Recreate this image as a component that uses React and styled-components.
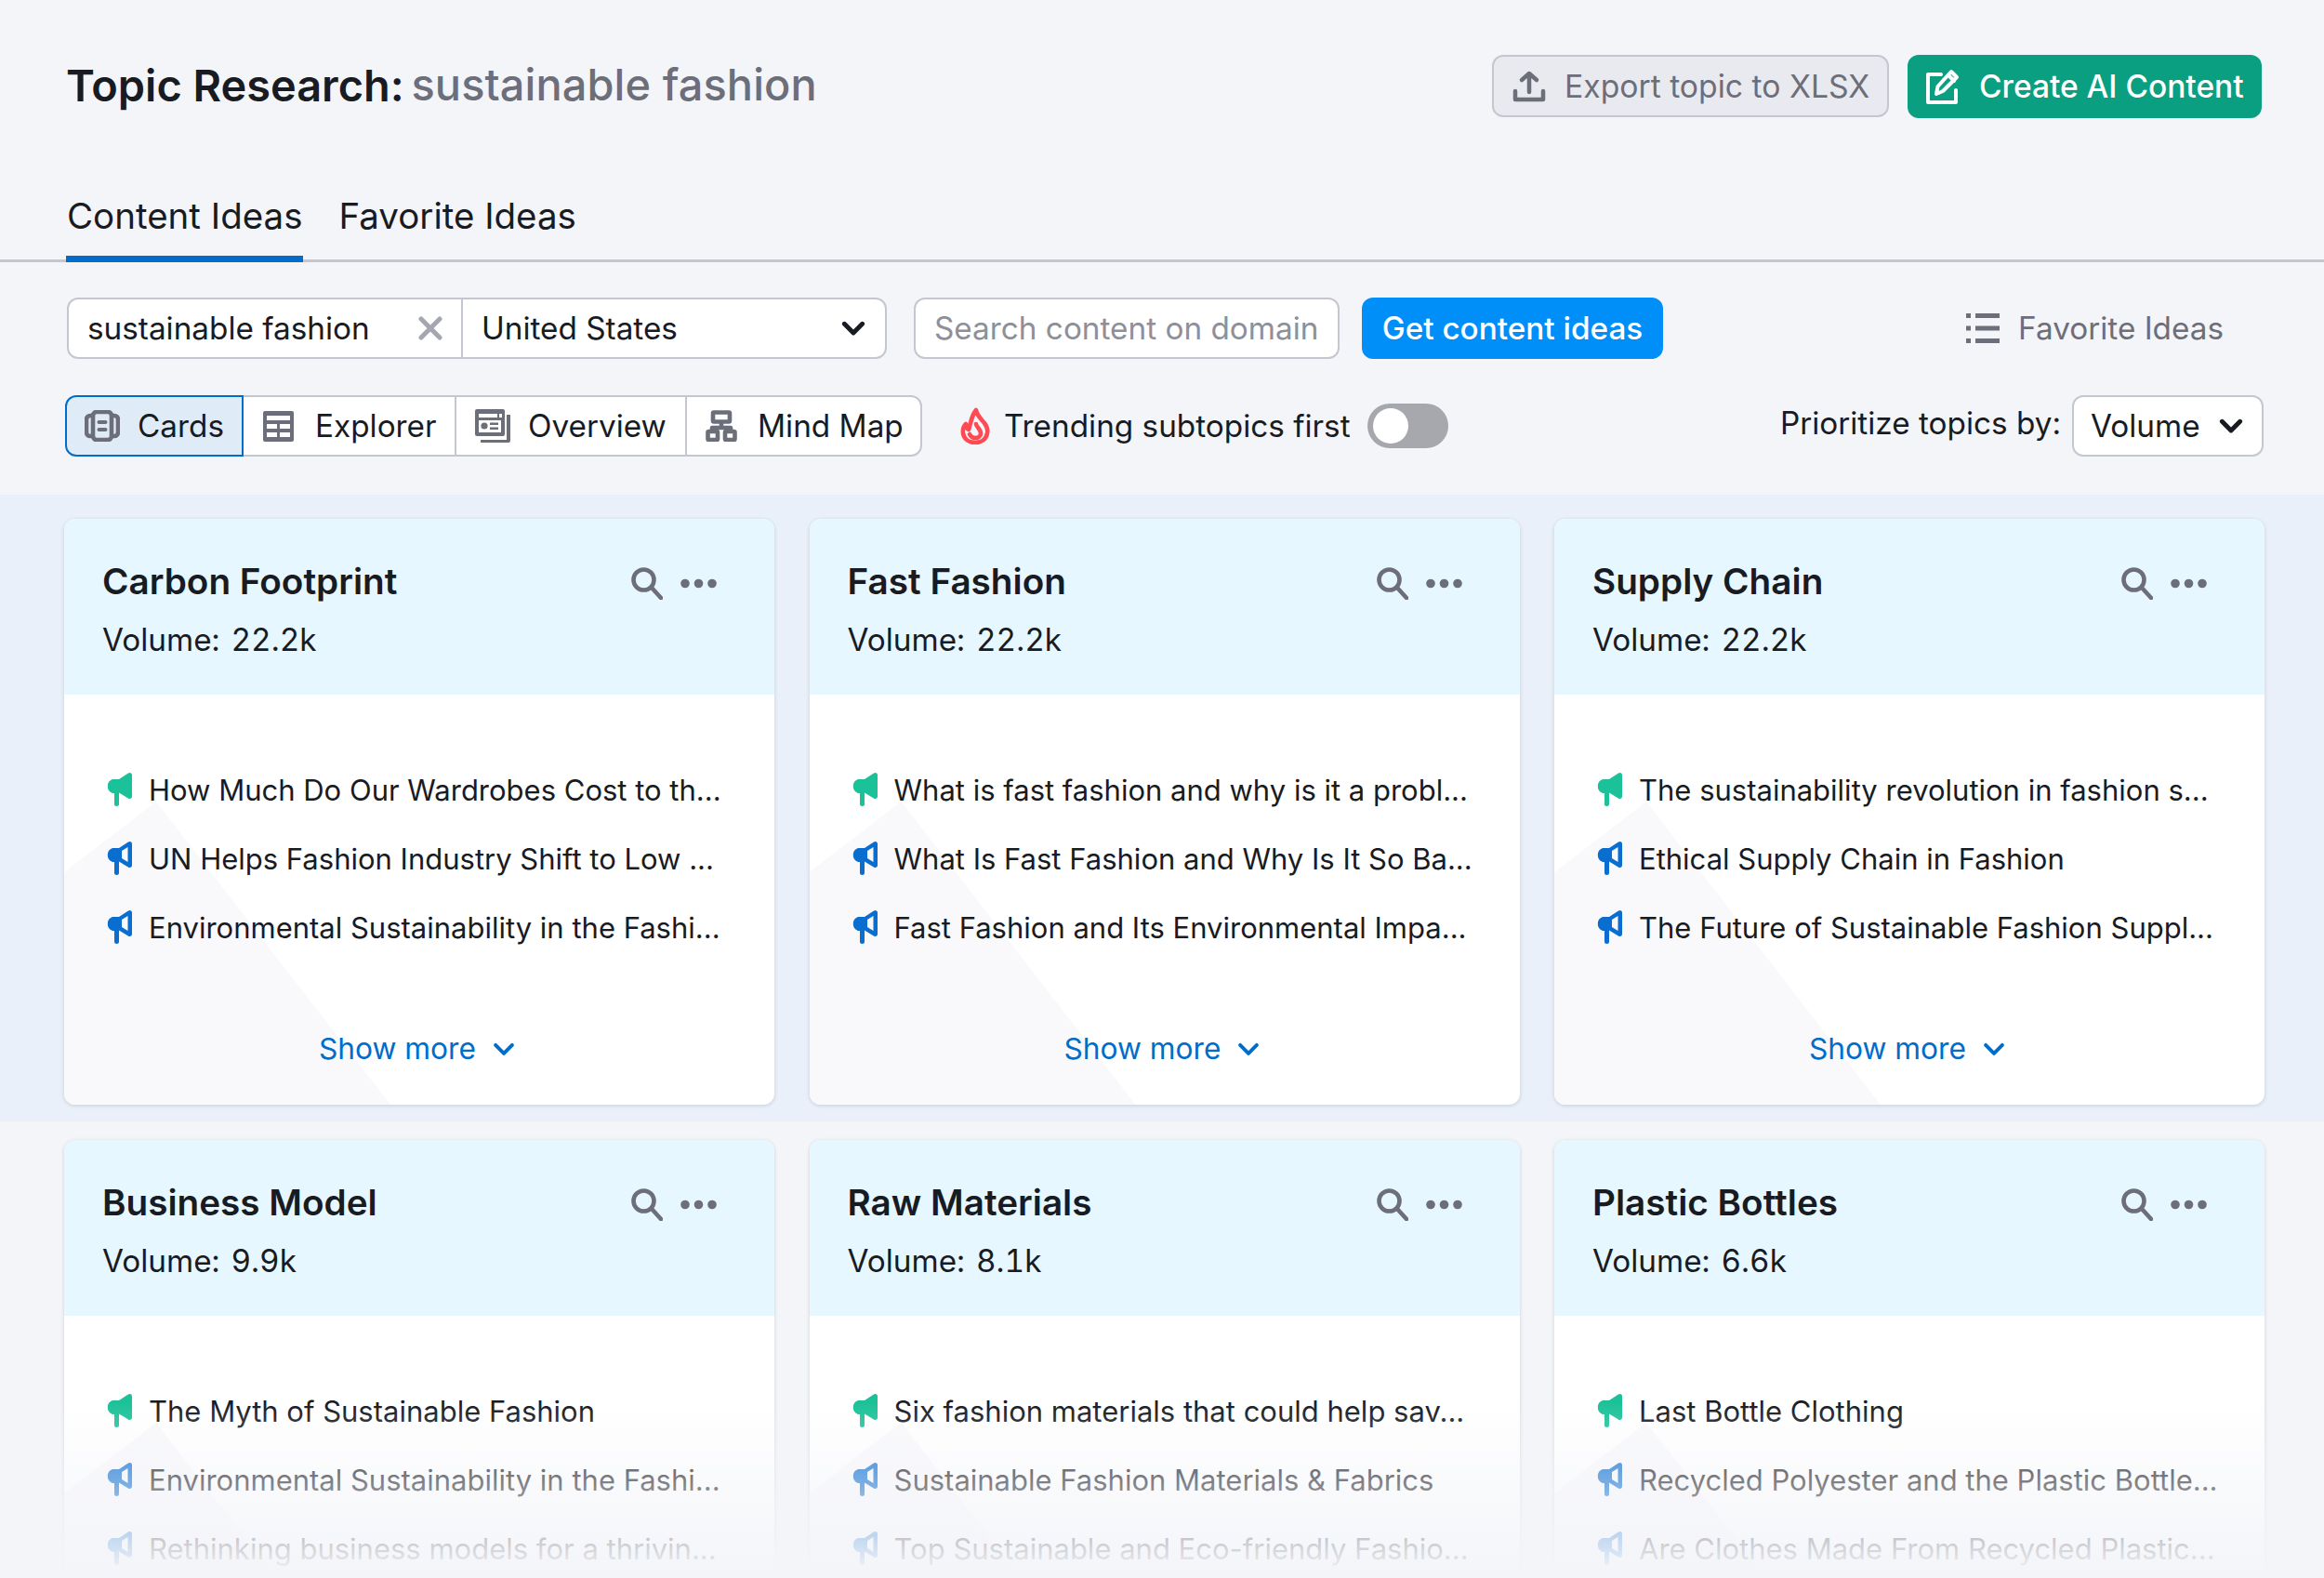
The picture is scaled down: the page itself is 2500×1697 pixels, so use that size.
import React from 'react'
import styled, { createGlobalStyle } from 'styled-components'

const GlobalStyle = createGlobalStyle`
    html, body {
        margin:0;
        padding:0;
        background:#f4f5f9;
    }
    * {
        box-sizing:border-box;
    }
`

const gray = '#6c6e79'
const ink = '#191b23'

const UploadIcon = () => <Svg width="36" height="36" viewBox="0 0 36 36" fill="none" stroke={gray} strokeWidth="4.5" strokeLinecap="round" strokeLinejoin="round">
    <path d="M18 24V4M10 11l8-7 8 7"/>
    <path d="M3 23v9h30v-9"/>
</Svg>

const PenIcon = () => <Svg width="40" height="40" viewBox="0 0 40 40" fill="none" stroke="#fff" strokeWidth="4" strokeLinecap="round" strokeLinejoin="round">
    <path d="M17 7H3v30h30V24"/>
    <path d="M12 28l1.500-8L28 4l6 6-15 15z"/>
    <path d="M25 8l6 6"/>
</Svg>

const CloseIcon = () => <Svg width="26" height="26" viewBox="0 0 26 26" stroke="#a4a6b0" strokeWidth="5" strokeLinecap="round">
    <path d="M3 3l20 20M23 3L3 23"/>
</Svg>

const Chevron = ({ color = ink, size = 26, weight = 4.6 }) => <Svg width={size} height={size * 0.7} viewBox="0 0 24 17" fill="none" stroke={color} strokeWidth={weight} strokeLinecap="round" strokeLinejoin="round">
    <path d="M3 4l9 9 9-9"/>
</Svg>

const ListIcon = () => <Svg width="36" height="32" viewBox="0 0 36 32" fill={gray}>
    <rect x="0" y="0" width="5" height="5"/>
    <rect x="10" y="0" width="26" height="5"/>
    <rect x="0" y="13.500" width="5" height="5"/>
    <rect x="10" y="13.500" width="26" height="5"/>
    <rect x="0" y="27" width="5" height="5"/>
    <rect x="10" y="27" width="26" height="5"/>
</Svg>

const CardsIcon = () => <Svg width="38" height="34" viewBox="0 0 38 34" fill="none" stroke={gray} strokeWidth="4.6">
    <rect x="9" y="2" width="20" height="30" rx="4"/>
    <path d="M9 6H6a4 4 0 0 0-4 4v14a4 4 0 0 0 4 4h3M29 6h3a4 4 0 0 1 4 4v14a4 4 0 0 1-4 4h-3"/>
    <path d="M15.500 13h7M15.500 21h7" strokeWidth="4" strokeLinecap="round"/>
</Svg>

const TableIcon = () => <Svg width="33" height="33" viewBox="0 0 33 33" fill={gray} fillRule="evenodd">
    <path d="M2 0h29a2 2 0 0 1 2 2v29a2 2 0 0 1-2 2H2a2 2 0 0 1-2-2V2a2 2 0 0 1 2-2zM4 5v5h25V5zM4 14v5h11v-5zM18 14v5h11v-5zM4 23v5h11v-5zM18 23v5h11v-5z"/>
</Svg>

const OverviewIcon = () => <Svg width="38" height="36" viewBox="0 0 38 36" fill={gray} fillRule="evenodd">
    <path d="M2 0h28a2 2 0 0 1 2 2v25a2 2 0 0 1-2 2H2a2 2 0 0 1-2-2V2a2 2 0 0 1 2-2zM4 5v4h20V5zM26 5v4h3V5zM4 12v13h24V12z"/>
    <circle cx="10" cy="18" r="3.600"/>
    <rect x="16" y="14.500" width="9" height="2.500"/>
    <rect x="16" y="19.500" width="9" height="2.500"/>
    <path d="M34 6h4v28a2 2 0 0 1-2 2H6v-3h28z"/>
</Svg>

const MindMapIcon = () => <Svg width="34" height="34" viewBox="0 0 34 34" fill="none" stroke={gray} strokeWidth="4.600" strokeLinejoin="round">
    <rect x="8" y="2.500" width="18" height="10" rx="1"/>
    <path d="M17 12v7M7 23v-4h20v4"/>
    <rect x="2.500" y="23" width="10.500" height="9" rx="1"/>
    <rect x="21" y="23" width="10.500" height="9" rx="1"/>
</Svg>

const FlameIcon = () => <Svg width="32" height="40" viewBox="0 0 32 40" fill="none" stroke="#ff4953" strokeWidth="4.600" strokeLinecap="round" strokeLinejoin="round">
    <path d="M17 3c1 6 5 9 9 14 3 4 4 7 3 11-1 6-6 10-13 10S4 34 3 28c-.5-4 1-8 3-10 0 3 1 5 3 6 1-2 1-4 2-7 1-5 3-10 6-14z"/>
    <path d="M17 18c0 3 5 5 5 10 0 3-3 5-6 5s-5-2-6-4"/>
</Svg>

const SearchIcon = () => <Svg width="34" height="35" viewBox="0 0 34 35" fill="none" stroke={gray} strokeWidth="4.600" strokeLinecap="round">
    <circle cx="13.500" cy="13.500" r="11"/>
    <path d="M22 22l10 11"/>
</Svg>

const DotsIcon = () => <Svg width="39" height="11" viewBox="0 0 39 11" fill={gray}>
    <circle cx="5" cy="5.500" r="4.800"/>
    <circle cx="19.500" cy="5.500" r="4.800"/>
    <circle cx="34" cy="5.500" r="4.800"/>
</Svg>

const MegaphoneIcon = ({ title }) => title
    ? <Svg width="29" height="36" viewBox="0 0 29 36" fill="#1bc198">
        <path d="M26.500 0C28 0 29 1 29 2.500v23c0 1.500-1 2.500-2.500 2.500-.6 0-1-.2-1.600-.6L15 21.500V33.500a2.500 2.500 0 0 1-5 0V22H8A8 8 0 0 1 8 7h7L25 .6c.5-.4 1-.6 1.500-.6z"/>
    </Svg>
    : <Svg width="29" height="36" viewBox="0 0 29 36" fill="#0a6dd0" fillRule="evenodd">
        <path d="M26.500 0C28 0 29 1 29 2.500v23c0 1.500-1 2.500-2.500 2.500-.6 0-1-.2-1.600-.6L15 21.500V33.500a2.500 2.500 0 0 1-5 0V22H8A8 8 0 0 1 8 7h7L25 .6c.5-.4 1-.6 1.500-.6zM24.500 6L18 10v8l6.500 4z"/>
    </Svg>

const ideaRows = [
    [
        {
            title: 'Carbon Footprint',
            volume: '22.2k',
            items: ['How Much Do Our Wardrobes Cost to th...', 'UN Helps Fashion Industry Shift to Low ...', 'Environmental Sustainability in the Fashi...']
        },
        {
            title: 'Fast Fashion',
            volume: '22.2k',
            items: ['What is fast fashion and why is it a probl...', 'What Is Fast Fashion and Why Is It So Ba...', 'Fast Fashion and Its Environmental Impa...']
        },
        {
            title: 'Supply Chain',
            volume: '22.2k',
            items: ['The sustainability revolution in fashion s...', 'Ethical Supply Chain in Fashion', 'The Future of Sustainable Fashion Suppl...']
        }
    ],
    [
        {
            title: 'Business Model',
            volume: '9.9k',
            items: ['The Myth of Sustainable Fashion', 'Environmental Sustainability in the Fashi...', 'Rethinking business models for a thrivin...']
        },
        {
            title: 'Raw Materials',
            volume: '8.1k',
            items: ['Six fashion materials that could help sav...', 'Sustainable Fashion Materials & Fabrics', 'Top Sustainable and Eco-friendly Fashio...']
        },
        {
            title: 'Plastic Bottles',
            volume: '6.6k',
            items: ['Last Bottle Clothing', 'Recycled Polyester and the Plastic Bottle...', 'Are Clothes Made From Recycled Plastic...']
        }
    ]
]

const views = [
    { label: 'Cards', icon: <CardsIcon/>, width: 192, pad: 19, gap: 19, active: true },
    { label: 'Explorer', icon: <TableIcon/>, width: 231, pad: 21, gap: 23 },
    { label: 'Overview', icon: <OverviewIcon/>, width: 250, pad: 20, gap: 19 },
    { label: 'Mind Map', icon: <MindMapIcon/>, width: 255, pad: 20, gap: 22 }
]

const IdeaCard = ({ title, volume, items, hasFooter }) => <Card>
    <CardHeader>
        <CardText>
            <CardTitle>{title}</CardTitle>
            <CardVolume><span>Volume:</span><span>{volume}</span></CardVolume>
        </CardText>
        <CardActions>
            <SearchIcon/>
            <DotsIcon/>
        </CardActions>
    </CardHeader>
    <CardBody>
        <IdeaList>
            {items.map((item, i) => <IdeaItem key={item}>
                <MegaphoneIcon title={i === 0}/>
                <span>{item}</span>
            </IdeaItem>)}
        </IdeaList>
        {hasFooter && <ShowMore>Show more <Chevron color="#006dca" size={24} weight={4}/></ShowMore>}
    </CardBody>
</Card>

const App = () => {
    return <Page>
        <GlobalStyle/>
        <TopBar>
            <Title>Topic Research: <span>sustainable fashion</span></Title>
            <TopActions>
                <ExportButton><UploadIcon/>Export topic to XLSX</ExportButton>
                <CreateButton><PenIcon/>Create AI Content</CreateButton>
            </TopActions>
        </TopBar>

        <Tabs>
            <Tab $active>Content Ideas</Tab>
            <Tab>Favorite Ideas</Tab>
        </Tabs>

        <SearchRow>
            <SearchGroup>
                <KeywordField>sustainable fashion<CloseIcon/></KeywordField>
                <CountryField>United States<Chevron/></CountryField>
            </SearchGroup>
            <DomainField>Search content on domain</DomainField>
            <GetIdeasButton>Get content ideas</GetIdeasButton>
            <FavoriteLink><ListIcon/>Favorite Ideas</FavoriteLink>
        </SearchRow>

        <ViewRow>
            <ViewSwitch>
                {views.map(view => <ViewButton key={view.label} $active={view.active} $width={view.width} $pad={view.pad} $gap={view.gap}>
                    {view.icon}{view.label}
                </ViewButton>)}
            </ViewSwitch>
            <Trending>
                <FlameIcon/>
                <span>Trending subtopics first</span>
                <Toggle/>
            </Trending>
            <Prioritize>
                <span>Prioritize topics by:</span>
                <VolumeSelect>Volume<Chevron/></VolumeSelect>
            </Prioritize>
        </ViewRow>

        <Band>
            <CardGrid>
                {ideaRows[0].map(card => <IdeaCard key={card.title} {...card} hasFooter/>)}
            </CardGrid>
        </Band>
        <PlainRow>
            <CardGrid>
                {ideaRows[1].map(card => <IdeaCard key={card.title} {...card}/>)}
            </CardGrid>
        </PlainRow>
        <BottomFade/>
    </Page>
}

const Page = styled.div`
    position:relative;
    width:2500px;
    height:1697px;
    overflow:hidden;
    background:#f4f5f9;
    color:${ink};
    font-family:Inter, "Liberation Sans", sans-serif;
    white-space:nowrap;
`

const Svg = styled.svg`
    flex:none;
`

const TopBar = styled.div`
    display:flex;
    justify-content:space-between;
    align-items:flex-start;
    height:200px;
    padding:59px 67px 0 71px;
`

const Title = styled.h1`
    margin:0;
    font-size:46.900px;
    line-height:66px;
    font-weight:600;

    span {
        position:relative;
        top:-1px;
        margin-left:-4px;
        color:${gray};
        font-weight:500;
        letter-spacing:0.100px;
    }
`

const TopActions = styled.div`
    display:flex;
    gap:20px;
`

const ExportButton = styled.div`
    display:flex;
    align-items:center;
    gap:20px;
    width:427px;
    height:67px;
    padding-left:20px;
    border:2px solid #c4c7cf;
    border-radius:12px;
    background:#e9eaef;
    color:${gray};
    font-size:33.700px;
`

const CreateButton = styled.div`
    display:flex;
    align-items:center;
    gap:18px;
    width:381px;
    height:68px;
    padding-left:19px;
    border-radius:12px;
    background:#0a9f81;
    color:#fff;
    font-size:33.500px;
    font-weight:500;
`

const Tabs = styled.div`
    display:flex;
    gap:37px;
    height:82px;
    padding-left:71px;
    border-bottom:3px solid #c4c7cf;
`

const Tab = styled.div`
    height:82px;
    padding:7px 1px 0;
    border-bottom:7px solid ${p => p.$active ? '#006dca' : 'transparent'};
    font-size:38.500px;
    line-height:50px;
`

const SearchRow = styled.div`
    display:flex;
    align-items:center;
    height:66px;
    margin-top:38px;
    padding-left:72px;
    padding-right:108px;
    font-size:33.300px;
`

const SearchGroup = styled.div`
    display:flex;
    width:882px;
    height:66px;
    border:2px solid #c4c7cf;
    border-radius:12px;
    background:#fff;
`

const KeywordField = styled.div`
    display:flex;
    align-items:center;
    justify-content:space-between;
    width:424px;
    padding:0 20px;
    border-right:2px solid #c4c7cf;
`

const CountryField = styled.div`
    display:flex;
    align-items:center;
    justify-content:space-between;
    flex:1;
    padding:0 21px 0 20px;
`

const DomainField = styled.div`
    display:flex;
    align-items:center;
    width:458px;
    height:66px;
    margin-left:29px;
    padding-left:20px;
    border:2px solid #c4c7cf;
    border-radius:12px;
    background:#fff;
    color:#8d8f99;
`

const GetIdeasButton = styled.div`
    display:flex;
    align-items:center;
    justify-content:center;
    width:324px;
    height:66px;
    margin-left:24px;
    border-radius:12px;
    background:#008ff8;
    color:#fff;
    font-weight:500;
`

const FavoriteLink = styled.div`
    display:flex;
    align-items:center;
    gap:20px;
    margin-left:auto;
    color:${gray};
`

const ViewRow = styled.div`
    display:flex;
    align-items:center;
    height:66px;
    margin-top:39px;
    padding:0 65px 0 70px;
    font-size:33.300px;
`

const ViewSwitch = styled.div`
    display:flex;
    height:66px;
`

const ViewButton = styled.div`
    position:relative;
    display:flex;
    align-items:center;
    gap:${p => p.$gap}px;
    width:${p => p.$width}px;
    padding-left:${p => p.$pad}px;
    margin-left:${p => p.$active ? 0 : '-2px'};
    border:2px solid ${p => p.$active ? '#006dca' : '#c4c7cf'};
    background:${p => p.$active ? '#e0ebf8' : '#fff'};
    z-index:${p => p.$active ? 1 : 0};

    &:first-child {
        border-radius:12px 0 0 12px;
    }

    &:last-child {
        border-radius:0 12px 12px 0;
    }
`

const Trending = styled.div`
    display:flex;
    align-items:center;
    margin-left:41px;

    span {
        margin:0 18px 0 15px;
    }
`

const Toggle = styled.div`
    position:relative;
    width:87px;
    height:48px;
    border-radius:24px;
    background:#a7a8ae;

    &::after {
        content:"";
        position:absolute;
        left:6px;
        top:5px;
        width:38px;
        height:38px;
        border-radius:50%;
        background:#fff;
    }
`

const Prioritize = styled.div`
    display:flex;
    align-items:center;
    gap:12px;
    margin-left:auto;

    span {
        position:relative;
        top:-3px;
    }
`

const VolumeSelect = styled.div`
    display:flex;
    align-items:center;
    justify-content:space-between;
    width:206px;
    height:66px;
    padding:0 20px 0 18px;
    border:2px solid #c4c7cf;
    border-radius:12px;
    background:#fff;
`

const Band = styled.section`
    margin-top:41px;
    height:674px;
    padding:26px 64px 0 69px;
    background:#e9f0fa;
`

const PlainRow = styled.section`
    padding:20px 64px 0 69px;
`

const CardGrid = styled.div`
    display:grid;
    grid-template-columns:repeat(3, 1fr);
    gap:37.500px;
`

const Card = styled.article`
    display:flex;
    flex-direction:column;
    height:630px;
    border-radius:12px;
    overflow:hidden;
    background:#fff;
    box-shadow:0 1px 4px rgba(25, 27, 35, 0.16);
`

const CardHeader = styled.header`
    display:flex;
    justify-content:space-between;
    height:189px;
    padding:43px 62px 0 41px;
    background:#e7f7ff;
`

const CardText = styled.div`
    display:flex;
    flex-direction:column;
    gap:15px;
`

const CardTitle = styled.h2`
    margin:0;
    font-size:38.700px;
    line-height:48px;
    font-weight:600;
`

const CardVolume = styled.div`
    display:flex;
    gap:12px;
    font-size:33.300px;
    line-height:48px;
    font-variant-numeric:tabular-nums;
`

const CardActions = styled.div`
    display:flex;
    align-items:center;
    gap:19px;
    height:44px;
    margin-top:4px;
`

const CardBody = styled.div`
    position:relative;
    display:flex;
    flex-direction:column;
    flex:1;
    padding:65px 41px 0 44px;

    &::before {
        content:"";
        position:absolute;
        inset:0;
        background:#f9f9fc;
        clip-path:polygon(0 191px, 99px 115px, 351px 441px, 0 441px);
    }
`

const IdeaList = styled.ul`
    position:relative;
    margin:0;
    padding:0;
    list-style:none;
`

const IdeaItem = styled.li`
    display:flex;
    align-items:center;
    gap:18px;
    height:74px;
    font-size:31px;
`

const ShowMore = styled.div`
    position:relative;
    display:flex;
    align-items:center;
    justify-content:center;
    gap:18px;
    margin-top:70px;
    padding-right:8px;
    color:#006dca;
    font-size:31.700px;
    line-height:48px;
`

const BottomFade = styled.div`
    position:absolute;
    left:0;
    right:0;
    bottom:0;
    height:190px;
    background:linear-gradient(to bottom, rgba(244, 245, 249, 0), #f4f5f9 98%);
`

export default App
